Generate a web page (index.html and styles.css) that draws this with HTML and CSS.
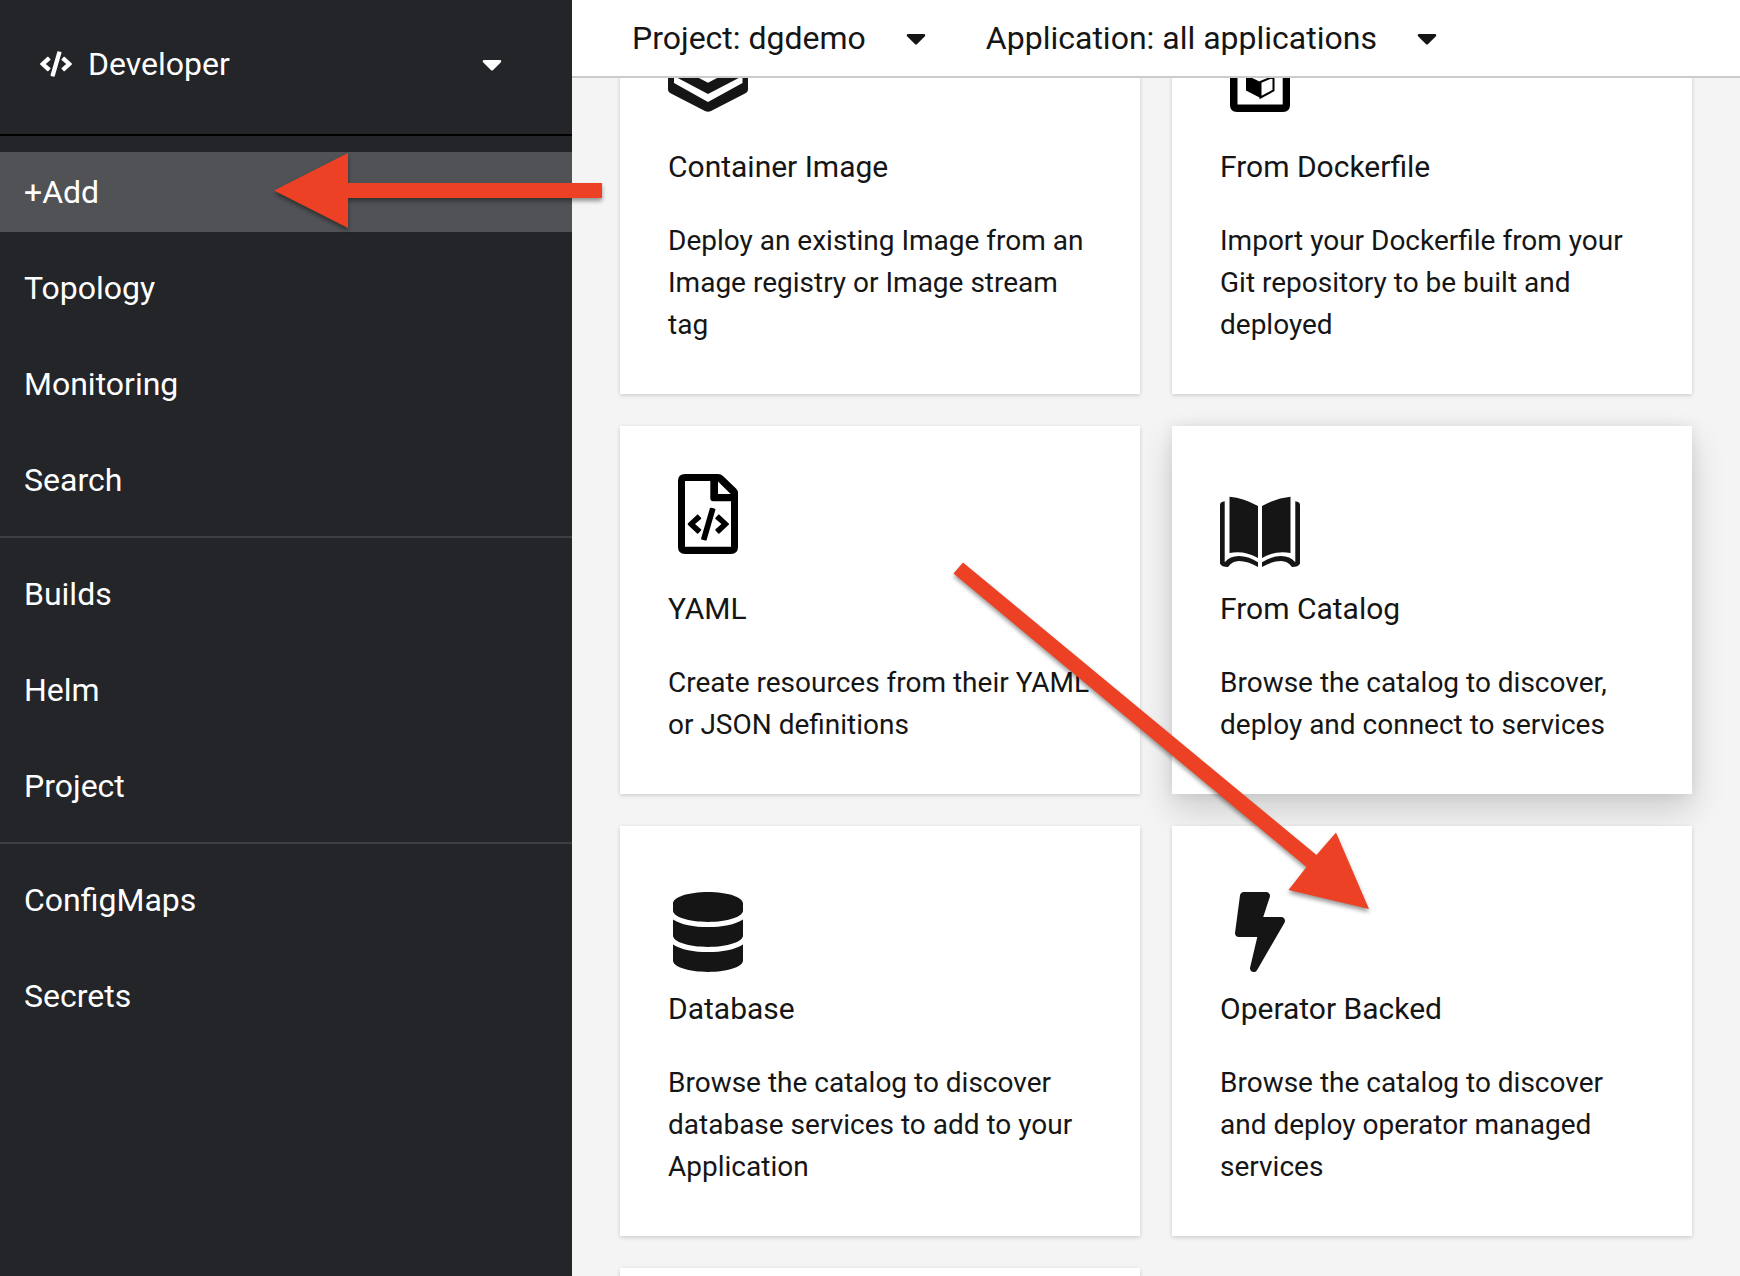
FILE: index.html
```html
<!DOCTYPE html>
<html lang="en">
<head>
<meta charset="utf-8">
<meta name="viewport" content="width=device-width, initial-scale=1">
<title>Add to project</title>
<link rel="stylesheet" href="styles.css">
</head>
<body>
<svg class="sprite" aria-hidden="true">
  <symbol id="code" viewBox="0 0 640 512"><path d="M278.9 511.5l-61-17.7c-6.4-1.8-10-8.5-8.2-14.9L346.2 8.7c1.8-6.4 8.5-10 14.9-8.2l61 17.7c6.4 1.8 10 8.5 8.2 14.9L293.8 503.3c-1.9 6.4-8.5 10.1-14.9 8.2zm-114-112.2l43.5-46.4c4.6-4.9 4.3-12.7-.8-17.2L117 256l90.6-79.7c5.1-4.5 5.5-12.3.8-17.2l-43.5-46.4c-4.5-4.8-12.1-5.1-17-.5L3.8 247.2c-5.1 4.7-5.1 12.8 0 17.5l144.1 135.1c4.9 4.6 12.5 4.4 17-.5zm327.2.6l144.1-135.1c5.1-4.7 5.1-12.8 0-17.5L492.1 112.1c-4.8-4.5-12.4-4.3-17 .5L431.6 159c-4.6 4.9-4.3 12.7.8 17.2L523 256l-90.6 79.7c-5.1 4.5-5.5 12.3-.8 17.2l43.5 46.4c4.5 4.9 12.1 5.1 17 .6z"/></symbol>
  <symbol id="caret" viewBox="0 0 320 512"><path d="M31.3 192h257.3c17.8 0 26.7 21.5 14.1 34.1L174.1 354.8c-7.8 7.8-20.5 7.8-28.3 0L17.2 226.1C4.6 213.5 13.5 192 31.3 192z"/></symbol>
</svg>
<div class="app">
  <aside class="sidebar">
    <button class="perspective" type="button">
      <svg class="perspective-icon" aria-hidden="true"><use href="#code"/></svg>
      <span class="perspective-name">Developer</span>
      <svg class="caret" aria-hidden="true"><use href="#caret"/></svg>
    </button>
    <nav>
      <ul class="nav-group">
        <li><a class="nav-link current" href="#add" aria-current="page">+Add</a></li>
        <li><a class="nav-link" href="#topology">Topology</a></li>
        <li><a class="nav-link" href="#monitoring">Monitoring</a></li>
        <li><a class="nav-link" href="#search">Search</a></li>
      </ul>
      <ul class="nav-group">
        <li><a class="nav-link" href="#builds">Builds</a></li>
        <li><a class="nav-link" href="#helm">Helm</a></li>
        <li><a class="nav-link" href="#project">Project</a></li>
      </ul>
      <ul class="nav-group">
        <li><a class="nav-link" href="#configmaps">ConfigMaps</a></li>
        <li><a class="nav-link" href="#secrets">Secrets</a></li>
      </ul>
    </nav>
  </aside>
  <div class="page">
    <header class="toolbar">
      <button class="picker" type="button">Project: dgdemo <svg class="caret" aria-hidden="true"><use href="#caret"/></svg></button>
      <button class="picker" type="button">Application: all applications <svg class="caret" aria-hidden="true"><use href="#caret"/></svg></button>
    </header>
    <main class="content">
      <div class="cards">
        <a class="card" href="#container-image">
          <span class="card-icon image">
            <svg viewBox="0 0 80 80" aria-hidden="true"><path d="M0 30V57Q0 60 3 61.500L37 79Q40 80.500 43 79L77 61.500Q80 60 80 57V30L40 50.700Z"/><path class="cut" d="M6 44V51L40 70L74.500 51V44L40 62Z"/><path d="M40 0L80 20L40 40L0 20Z"/></svg>
          </span>
          <h2 class="card-title">Container Image</h2>
          <p class="card-text">Deploy an existing Image from an Image registry or Image stream tag</p>
        </a>
        <a class="card" href="#dockerfile">
          <span class="card-icon image black">
            <svg viewBox="0 0 80 80" aria-hidden="true"><path fill-rule="evenodd" d="M17 0H52L70 18V73Q70 80 63 80H17Q10 80 10 73V7Q10 0 17 0ZM17.500 7V72.500H62.700V27H42V7Z"/><path d="M26 43L40.500 50V66L26 58.500Z"/><path class="line" d="M40.500 50L53.500 44.500V58.500L40.500 65.500Z"/></svg>
          </span>
          <h2 class="card-title">From Dockerfile</h2>
          <p class="card-text">Import your Dockerfile from your Git repository to be built and deployed</p>
        </a>
        <a class="card" href="#yaml">
          <span class="card-icon image black">
            <svg viewBox="0 0 80 80" aria-hidden="true"><path fill-rule="evenodd" d="M17 0H50Q53 0 55 2L68 14.500Q70 16.500 70 19V73Q70 80 63 80H17Q10 80 10 73V7Q10 0 17 0ZM17 7V72.700H63V27.300H45.300Q42.300 27.300 42.300 24.300V7ZM50 7.500V20H62.700Z"/><use href="#code" x="19.500" y="33.500" width="41.500" height="33.200"/></svg>
          </span>
          <h2 class="card-title">YAML</h2>
          <p class="card-text">Create resources from their YAML or JSON definitions</p>
        </a>
        <a class="card raised" href="#catalog">
          <span class="card-icon">
            <svg viewBox="0 0 80 80" aria-hidden="true"><g id="leaf"><path d="M9.500 4.700Q24 6 38 14V66Q24 58 9.500 61Z"/><path d="M4.700 9.300Q0 10 0 13V71.500Q1.500 75 8 75Q12 69 19 69Q28 69 38 75V70.300Q28 64 19 64Q10 64 4.700 70.300Z"/></g><use href="#leaf" transform="matrix(-1 0 0 1 80 0)"/></svg>
          </span>
          <h2 class="card-title">From Catalog</h2>
          <p class="card-text">Browse the catalog to discover, deploy and connect to services</p>
        </a>
        <a class="card" href="#database">
          <span class="card-icon">
            <svg viewBox="0 0 448 512" aria-hidden="true"><path d="M448 73.143v45.714C448 159.143 347.667 192 224 192S0 159.143 0 118.857V73.143C0 32.857 100.333 0 224 0s224 32.857 224 73.143zM448 176v102.857C448 319.143 347.667 352 224 352S0 319.143 0 278.857V176c48.125 33.143 136.208 48.572 224 48.572S399.874 209.143 448 176zm0 160v102.857C448 479.143 347.667 512 224 512S0 479.143 0 438.857V336c48.125 33.143 136.208 48.572 224 48.572S399.874 369.143 448 336z"/></svg>
          </span>
          <h2 class="card-title">Database</h2>
          <p class="card-text">Browse the catalog to discover database services to add to your Application</p>
        </a>
        <a class="card" href="#operator-backed">
          <span class="card-icon">
            <svg viewBox="0 0 320 512" aria-hidden="true"><path d="M296 160H180.600l42.600-129.800C227.200 15 215.700 0 200 0H56C44 0 33.800 8.900 32.200 20.800l-32 240C-1.700 275.200 9.500 288 24 288h118.700L96.600 482.500c-3.600 15.200 8 29.500 23.300 29.500 8.400 0 16.400-4.400 20.800-12l176-304c9.300-15.900-2.200-36-20.700-36z"/></svg>
          </span>
          <h2 class="card-title">Operator Backed</h2>
          <p class="card-text">Browse the catalog to discover and deploy operator managed services</p>
        </a>
        <div class="card"></div>
      </div>
    </main>
  </div>
  <svg class="arrows" viewBox="0 0 1400 940" aria-hidden="true">
    <path d="M274 190.500L348 153V183H602V198H348V228Z"/>
    <path d="M1369 909L1336 832.500L1316.500 855L963 562.500L953.500 573.500L1306.500 867L1288.500 890Z"/>
  </svg>
</div>
</body>
</html>
```
FILE: styles.css
```css
* {
  box-sizing: border-box;
}

body {
  margin: 0;
  font-family: Roboto, "Liberation Sans", sans-serif;
  font-size: 32px;
  line-height: 48px;
  color: #151515;
  background: #f4f4f4;
}

button {
  padding: 0;
  border: 0;
  background: none;
  color: inherit;
  font: inherit;
  text-align: left;
  cursor: pointer;
}

a {
  color: inherit;
  text-decoration: none;
}

svg {
  fill: currentColor;
}

.sprite {
  position: absolute;
  width: 0;
  height: 0;
}

.app {
  position: relative;
  display: flex;
  height: 100vh;
  overflow: hidden;
}

.caret {
  width: 20px;
  height: 32px;
}

/* Sidebar */

.sidebar {
  flex: 0 0 572px;
  background: #232529;
  color: #fff;
}

.perspective {
  display: flex;
  align-items: center;
  gap: 16px;
  width: 100%;
  padding: 40px 70px 46px 40px;
  border-bottom: 2px solid #000;
}

.perspective-icon {
  width: 32px;
  height: 26px;
}

.perspective-name {
  flex: 1;
}

.nav-group {
  display: flex;
  flex-direction: column;
  gap: 16px;
  margin: 0;
  padding: 16px 0;
  list-style: none;
}

.nav-group + .nav-group {
  border-top: 2px solid #3c3f42;
}

.nav-link {
  display: block;
  padding: 16px 24px;
}

.nav-link.current {
  background: #505255;
}

/* Page */

.page {
  display: flex;
  flex: 1;
  flex-direction: column;
  min-width: 0;
}

.toolbar {
  display: flex;
  gap: 60px;
  padding: 14px 60px;
  border-bottom: 2px solid #ccc;
  background: #fff;
}

.picker {
  display: flex;
  align-items: center;
  gap: 40px;
}

.content {
  flex: 1;
  min-height: 0;
  padding: 0 48px;
  overflow: hidden;
}

/* The list is shown scrolled, its first row part-way under the toolbar. */
.cards {
  display: grid;
  grid-template-columns: 1fr 1fr;
  gap: 32px;
  margin-top: -94px;
}

.card {
  min-height: 368px;
  padding: 48px;
  background: #fff;
  box-shadow: 0 2px 4px rgba(3, 3, 3, 0.12), 0 0 4px rgba(3, 3, 3, 0.06);
}

.card.raised {
  box-shadow: 0 16px 32px rgba(3, 3, 3, 0.16), 0 0 12px rgba(3, 3, 3, 0.08);
}

.card-icon {
  display: flex;
  align-items: flex-end;
  width: 80px;
  height: 98px;
}

.card-icon.image {
  align-items: flex-start;
}

.card-icon.black {
  color: #000;
}

.card-icon svg {
  width: 80px;
  height: 80px;
}

.cut {
  fill: #fff;
}

.line {
  fill: none;
  stroke: currentColor;
  stroke-width: 2;
}

.card-title {
  margin: 16px 0 32px;
  font-size: 30px;
  font-weight: 400;
  line-height: 42px;
}

.card-text {
  margin: 0;
  font-size: 28px;
  line-height: 42px;
}

/* Callout arrows over the page */

.arrows {
  position: absolute;
  top: 0;
  left: 0;
  width: 1400px;
  height: 940px;
  color: #ec4125;
  filter: drop-shadow(0 3px 2px rgba(0, 0, 0, 0.4));
  pointer-events: none;
}
```
